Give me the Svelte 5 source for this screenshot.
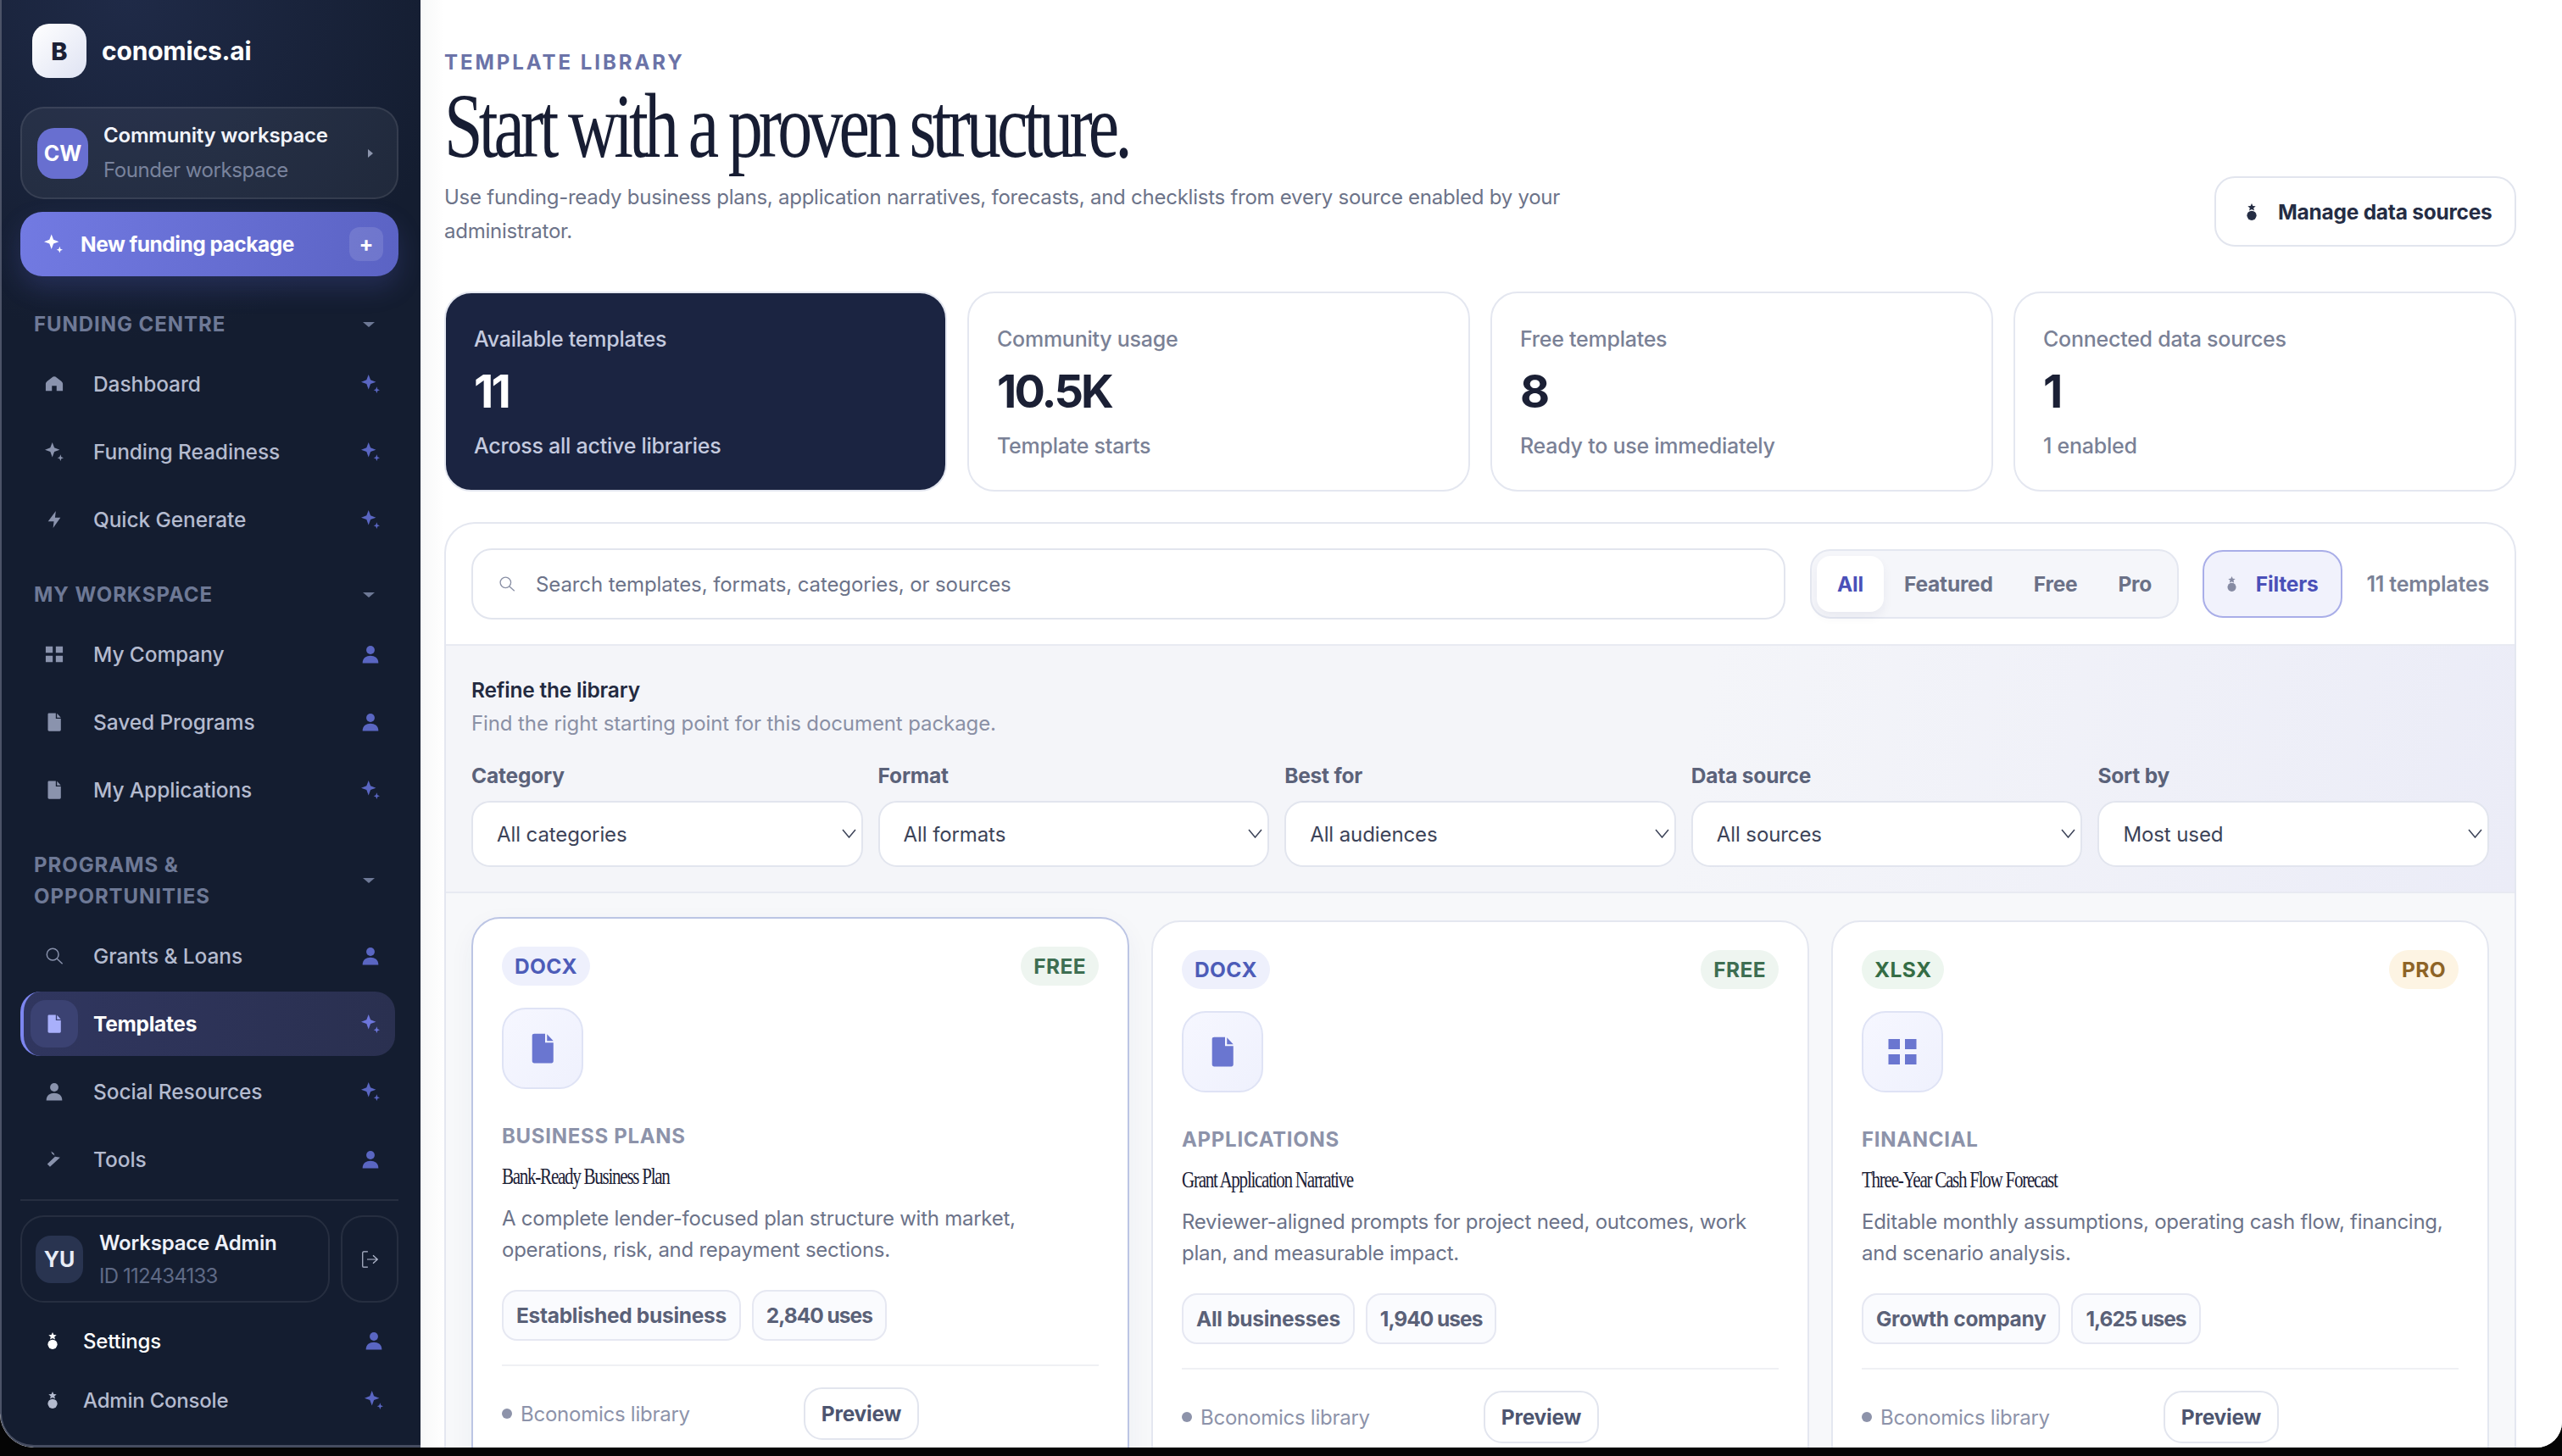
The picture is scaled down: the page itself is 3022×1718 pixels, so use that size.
<script>
  const fc = [
    { label: 'Dashboard', icon: 'home', tail: 'spark' },
    { label: 'Funding Readiness', icon: 'spark', tail: 'spark' },
    { label: 'Quick Generate', icon: 'bolt', tail: 'spark' }
  ];
  const ws = [
    { label: 'My Company', icon: 'grid', tail: 'user' },
    { label: 'Saved Programs', icon: 'file', tail: 'user' },
    { label: 'My Applications', icon: 'file', tail: 'spark' }
  ];
  const pr = [
    { label: 'Grants & Loans', icon: 'search', tail: 'user' },
    { label: 'Templates', icon: 'file', tail: 'spark', active: true },
    { label: 'Social Resources', icon: 'user', tail: 'spark' },
    { label: 'Tools', icon: 'tool', tail: 'user' }
  ];
  const groups = [
    { title: 'FUNDING CENTRE', items: fc },
    { title: 'MY WORKSPACE', items: ws },
    { title: 'PROGRAMS & OPPORTUNITIES', items: pr }
  ];
  const stats = [
    { label: 'Available templates', value: '11', sub: 'Across all active libraries', dark: true },
    { label: 'Community usage', value: '10.5K', sub: 'Template starts' },
    { label: 'Free templates', value: '8', sub: 'Ready to use immediately' },
    { label: 'Connected data sources', value: '1', sub: '1 enabled' }
  ];
  const filters = [
    { label: 'Category', value: 'All categories' },
    { label: 'Format', value: 'All formats' },
    { label: 'Best for', value: 'All audiences' },
    { label: 'Data source', value: 'All sources' },
    { label: 'Sort by', value: 'Most used' }
  ];
  const cards = [
    { fmt: 'DOCX', fmtC: 'docx', tier: 'FREE', tierC: 'free', icon: 'file', cat: 'BUSINESS PLANS', title: 'Bank-Ready Business Plan', desc: 'A complete lender-focused plan structure with market, operations, risk, and repayment sections.', tag: 'Established business', uses: '2,840 uses', lifted: true },
    { fmt: 'DOCX', fmtC: 'docx', tier: 'FREE', tierC: 'free', icon: 'file', cat: 'APPLICATIONS', title: 'Grant Application Narrative', desc: 'Reviewer-aligned prompts for project need, outcomes, work plan, and measurable impact.', tag: 'All businesses', uses: '1,940 uses' },
    { fmt: 'XLSX', fmtC: 'xlsx', tier: 'PRO', tierC: 'pro', icon: 'grid', cat: 'FINANCIAL', title: 'Three-Year Cash Flow Forecast', desc: 'Editable monthly assumptions, operating cash flow, financing, and scenario analysis.', tag: 'Growth company', uses: '1,625 uses' }
  ];
</script>

{#snippet glyph(name)}
  {#if name === 'spark'}
    <svg class="ic" viewBox="0 0 24 24"><path d="M9.500 0 L12.100 6.900 L19 9.500 L12.100 12.100 L9.500 19 L6.900 12.100 L0 9.500 L6.900 6.900 Z M20 15.500 L21.100 18.900 L24 20 L21.100 21.100 L20 24 L18.900 21.100 L16 20 L18.900 18.900 Z" fill="currentColor"/></svg>
  {:else if name === 'user'}
    <svg class="ic" viewBox="0 0 24 24"><circle cx="12" cy="6.600" r="5.400" fill="currentColor"/><path d="M1.800 23.500 C1.800 17 6.500 14 12 14 C17.500 14 22.200 17 22.200 23.500 Z" fill="currentColor"/></svg>
  {:else if name === 'home'}
    <svg class="ic" viewBox="0 0 24 24"><path d="M1 12 C1 10.500 2 9.500 3 8.500 L9 3.700 C11 2.200 13 2.200 15 3.700 L21 8.500 C22 9.500 23 10.500 23 12 V21 H15 V14.500 H9 V21 H1 Z" fill="currentColor"/></svg>
  {:else if name === 'grid'}
    <svg class="ic" viewBox="0 0 24 24"><path d="M1 2 H10 V10 H1 Z M14 2 H23 V10 H14 Z M1 14 H10 V22 H1 Z M14 14 H23 V22 H14 Z" fill="currentColor"/></svg>
  {:else if name === 'file'}
    <svg class="ic" viewBox="0 0 24 24"><path d="M5.500 0.500 H14 V7.500 H20.500 V22 C20.500 23 19.800 23.600 19 23.600 H5.500 C4.500 23.600 3.800 23 3.800 22 V2 C3.800 1 4.500 0.500 5.500 0.500 Z M15.500 0.800 L20.500 6.200 H15.500 Z" fill="currentColor"/></svg>
  {:else if name === 'bolt'}
    <svg class="ic" viewBox="0 0 24 24"><path d="M14 1 L13 9.500 H20 L10.500 23 L11.500 14.500 H4 Z" fill="currentColor"/></svg>
  {:else if name === 'search'}
    <svg class="ic" viewBox="0 0 24 24"><circle cx="10" cy="10" r="7.500" fill="none" stroke="currentColor" stroke-width="1.600"/><path d="M15.500 15.500 L22.500 22" fill="none" stroke="currentColor" stroke-width="1.600"/></svg>
  {:else if name === 'tool'}
    <svg class="ic" viewBox="0 0 24 24"><path d="M6.500 21.500 L3 18 L13 8.500 L19.500 9.500 Z M8 1.500 L11.500 4 L12.500 7 L9 4.500 Z" fill="currentColor"/></svg>
  {:else if name === 'medal'}
    <svg class="ic" viewBox="0 0 12 20"><path d="M6 0 L7.400 3 L10.700 3.300 L8.200 5.400 L9 8.600 L6 6.900 L3 8.600 L3.800 5.400 L1.300 3.300 L4.600 3 Z" fill="currentColor"/><circle cx="6" cy="14.300" r="5.600" fill="currentColor"/></svg>
  {/if}
{/snippet}

<div class="window">
  <aside class="side">
    <div class="brand">
      <div class="logo">B</div>
      <span class="wordmark">conomics.ai</span>
    </div>
    <div class="wscard">
      <div class="wsav">CW</div>
      <div class="wstext">
        <div class="wsname">Community workspace</div>
        <div class="wssub">Founder workspace</div>
      </div>
      <span class="wscaret"></span>
    </div>
    <button class="newbtn">
      <span class="newspark">{@render glyph('spark')}</span>
      <span class="newlabel">New funding package</span>
      <span class="newplus">+</span>
    </button>

    {#each groups as g}
      <section class="group">
        <div class="ghead">
          <span class="gtitle">{g.title}</span>
          <span class="gcaret"></span>
        </div>
        {#each g.items as it}
          <div class="nav" class:active={it.active}>
            <span class="navic">{@render glyph(it.icon)}</span>
            <span class="navlabel">{it.label}</span>
            <span class="navtail">{@render glyph(it.tail)}</span>
          </div>
        {/each}
      </section>
    {/each}

    <div class="sidefoot">
      <div class="userrow">
        <div class="usercard">
          <div class="userav">YU</div>
          <div>
            <div class="username">Workspace Admin</div>
            <div class="userid">ID 112434133</div>
          </div>
        </div>
        <div class="logout">
          <svg viewBox="0 0 24 24" class="logoutic"><path d="M9 1.500 H3.500 C2.500 1.500 2 2 2 3 V21 C2 22 2.500 22.500 3.500 22.500 H9 M8 12 H22 M16 6.500 L22 12 L16 17.500" fill="none" stroke="currentColor" stroke-width="1.400"/></svg>
        </div>
      </div>
      <div class="footnav bright">
        <span class="footic">{@render glyph('medal')}</span>
        <span class="footlabel">Settings</span>
        <span class="foottail">{@render glyph('user')}</span>
      </div>
      <div class="footnav">
        <span class="footic">{@render glyph('medal')}</span>
        <span class="footlabel">Admin Console</span>
        <span class="foottail">{@render glyph('spark')}</span>
      </div>
    </div>
  </aside>

  <main class="main">
    <header class="head">
      <div>
        <div class="eyebrow">TEMPLATE LIBRARY</div>
        <h1 class="title">Start with a proven structure.</h1>
        <p class="lede">Use funding-ready business plans, application narratives, forecasts, and checklists from every source enabled by your administrator.</p>
      </div>
      <button class="manage">
        <span class="manageic">{@render glyph('medal')}</span>
        Manage data sources
      </button>
    </header>

    <div class="stats">
      {#each stats as s}
        <div class="stat" class:dark={s.dark}>
          <div class="statlabel">{s.label}</div>
          <div class="statvalue">{s.value}</div>
          <div class="statsub">{s.sub}</div>
        </div>
      {/each}
    </div>

    <div class="panel">
      <div class="toolbar">
        <div class="search">
          <span class="searchic">{@render glyph('search')}</span>
          <span>Search templates, formats, categories, or sources</span>
        </div>
        <div class="seg">
          <span class="segitem on">All</span>
          <span class="segitem">Featured</span>
          <span class="segitem">Free</span>
          <span class="segitem">Pro</span>
        </div>
        <button class="filters">
          <span class="filtic">{@render glyph('medal')}</span>
          Filters
        </button>
        <span class="count">11 templates</span>
      </div>

      <div class="refine">
        <div class="refinetitle">Refine the library</div>
        <div class="refinesub">Find the right starting point for this document package.</div>
        <div class="refinegrid">
          {#each filters as f}
            <div class="field">
              <div class="fieldlabel">{f.label}</div>
              <div class="selectbox">
                <select class="select"><option>{f.value}</option></select>
                <svg class="chev" viewBox="0 0 17 11"><path d="M1 1 L8.500 10 L16 1" fill="none" stroke="currentColor" stroke-width="1.500"/></svg>
              </div>
            </div>
          {/each}
        </div>
      </div>

      <div class="cards">
        {#each cards as c}
          <article class="card" class:lifted={c.lifted}>
            <div class="cardtop">
              <span class="pill {c.fmtC}">{c.fmt}</span>
              <span class="pill {c.tierC}">{c.tier}</span>
            </div>
            <div class="tile">{@render glyph(c.icon)}</div>
            <div class="cat">{c.cat}</div>
            <h3 class="ctitle">{c.title}</h3>
            <p class="cdesc">{c.desc}</p>
            <div class="tags">
              <span class="tag">{c.tag}</span>
              <span class="tag uses">{c.uses}</span>
            </div>
            <div class="cfoot">
              <span class="source"><span class="dot"></span>Bconomics library</span>
              <button class="preview">Preview</button>
            </div>
          </article>
        {/each}
      </div>
    </div>
  </main>
</div>

<style>
  :global(body) { margin: 0; background: #050505; }
  .window {
    width: 3022px; height: 1708px; display: flex; overflow: hidden;
    border-radius: 0 0 30px 40px; background: #fff;
    font-family: Inter, "Noto Sans", sans-serif; color: #1b2035;
  }
  button { font-family: inherit; }
  .ic { display: block; width: 100%; height: 100%; }

  .side {
    width: 496px; flex: none; box-sizing: border-box; padding: 28px 26px 0 22px;
    display: flex; flex-direction: column;
    background: radial-gradient(circle at 30% 0%, #1f2a47 0, #141d30 400px), #141d30;
    border-left: 2px solid #4c5367; border-bottom: 3px solid #454c60; border-radius: 0 0 0 40px;
    color: #b4bbcf;
  }
  .brand { display: flex; align-items: center; gap: 18px; padding-left: 14px; margin-bottom: 34px; }
  .logo {
    width: 64px; height: 64px; border-radius: 20px; display: flex; align-items: center; justify-content: center;
    background: linear-gradient(135deg, #fff, #dfe3f3); color: #1b2035; font-weight: 800; font-size: 29px;
  }
  .wordmark { color: #fff; font-size: 30px; font-weight: 700; letter-spacing: -0.200px; }
  .wscard {
    height: 109px; box-sizing: border-box; display: flex; align-items: center; gap: 18px; padding: 0 18px;
    border: 2px solid rgba(255,255,255,.09); background: rgba(255,255,255,.055); border-radius: 28px; margin-bottom: 15px;
  }
  .wsav {
    width: 60px; height: 60px; border-radius: 20px; background: #686fd0; color: #fff;
    display: flex; align-items: center; justify-content: center; font-size: 25px; font-weight: 700; flex: none;
  }
  .wstext { flex: 1; min-width: 0; }
  .wsname { color: #f2f4fb; font-size: 24px; font-weight: 600; line-height: 40px; letter-spacing: -0.200px; }
  .wssub { color: #79839d; font-size: 24px; font-weight: 400; line-height: 40px; letter-spacing: -0.450px; margin-top: 1px; }
  .wscaret { width: 0; height: 0; border-left: 6px solid #8c95ad; border-top: 5px solid transparent; border-bottom: 5px solid transparent; margin-right: 10px; }
  .newbtn {
    height: 76px; flex: none; border: 0; border-radius: 26px; background: linear-gradient(100deg, #727ae2, #5b63c4);
    color: #fff; display: flex; align-items: center; padding: 0 18px 0 28px; cursor: pointer;
    box-shadow: 0 14px 30px rgba(90,100,210,.22); margin-bottom: 38px;
  }
  .newspark { width: 22px; height: 23px; margin-right: 21px; margin-top: -2px; }
  .newlabel { flex: 1; text-align: left; font-size: 24.500px; font-weight: 700; letter-spacing: -0.500px; }
  .newplus {
    width: 40px; height: 40px; border-radius: 12px; background: rgba(255,255,255,.12);
    display: flex; align-items: center; justify-content: center; font-size: 25px; font-weight: 700;
  }

  .group { margin-bottom: 28px; }
  .group:last-of-type { margin-bottom: 0; }
  .ghead { display: flex; align-items: center; padding: 0 28px 0 16px; margin-bottom: 14px; min-height: 37px; }
  .gtitle { flex: 1; max-width: 270px; font-size: 24px; line-height: 37px; font-weight: 700; letter-spacing: 0.950px; color: #6e7996; }
  .gcaret { margin-left: auto; width: 0; height: 0; border-top: 6px solid #6e7996; border-left: 7px solid transparent; border-right: 7px solid transparent; }
  .nav {
    position: relative; height: 76px; margin: 0 4px 4px 0; box-sizing: border-box;
    display: flex; align-items: center; padding: 0 18px 0 0; font-size: 24.500px; font-weight: 500; border-radius: 24px;
  }
  .navic { width: 22px; height: 24px; margin-left: 29px; margin-right: 35px; color: #8a93ad; flex: none; }
  .navlabel { flex: 1; letter-spacing: -0.100px; }
  .navtail { width: 22px; height: 24px; color: #5a66c2; flex: none; }
  .nav.active {
    background: linear-gradient(90deg, #30365f, #2a3050); color: #fff; font-weight: 700; border-left: 4px solid #7d86f0;
    isolation: isolate;
  }
  .nav.active .navlabel { letter-spacing: -0.300px; }
  .nav.active .navic { color: #a9b0fb; margin-left: 25px; position: relative; }
  .nav.active .navic::before {
    content: ""; position: absolute; left: -17px; top: -16px; width: 56px; height: 56px;
    border-radius: 18px; background: #3b4272; z-index: -1;
  }
  .nav.active .navtail { color: #6d76dc; }

  .sidefoot { margin-top: auto; border-top: 2px solid rgba(255,255,255,.08); padding-top: 17px; padding-bottom: 18px; }
  .userrow { display: flex; gap: 13px; margin-bottom: 10px; }
  .usercard {
    width: 365px; height: 103px; box-sizing: border-box; display: flex; align-items: center; gap: 19px; padding-left: 16px;
    border: 2px solid rgba(255,255,255,.08); border-radius: 28px;
  }
  .userav {
    width: 56px; height: 56px; border-radius: 18px; background: #293450; color: #e8ecf6;
    display: flex; align-items: center; justify-content: center; font-weight: 700; font-size: 25px; flex: none;
  }
  .username { color: #eef1f9; font-size: 24px; font-weight: 600; line-height: 39px; letter-spacing: -0.200px; }
  .userid { color: #5f6a86; font-size: 24px; line-height: 39px; letter-spacing: -0.800px; }
  .logout {
    width: 68px; height: 103px; box-sizing: border-box; border: 2px solid rgba(255,255,255,.08); border-radius: 26px;
    display: flex; align-items: center; justify-content: center; color: #b4bbcf;
  }
  .logoutic { width: 21px; height: 22px; }
  .footnav { height: 70px; display: flex; align-items: center; font-size: 24px; font-weight: 500; color: #b4bbcf; }
  .footnav.bright { color: #fff; }
  .footic { width: 12px; height: 20px; margin-left: 32px; margin-right: 30px; flex: none; }
  .footlabel { flex: 1; letter-spacing: -0.200px; }
  .foottail { width: 22px; height: 24px; color: #5a66c2; margin-right: 18px; }

  .main {
    flex: 1; min-width: 0; box-sizing: border-box; padding: 58px 54px 0 28px; overflow: hidden;
    background: linear-gradient(90deg, #f7f8f8 0, #fff 28px);
  }
  .head { display: flex; justify-content: space-between; align-items: flex-end; margin-bottom: 51px; }
  .eyebrow { font-size: 24px; line-height: 30px; font-weight: 700; letter-spacing: 2.950px; color: #6b73a8; margin-top: 1px; margin-bottom: -1px; }
  .title {
    margin: 7px 0 10px; font-family: "Liberation Serif", serif; font-weight: 400; font-size: 108px; line-height: 108px;
    letter-spacing: -6.500px; color: #171d33; transform: scaleX(0.76); transform-origin: left center; white-space: nowrap;
  }
  .lede { margin: 0; width: 1400px; font-size: 24px; line-height: 40px; color: #6c7389; letter-spacing: -0.250px; }
  .manage {
    width: 356px; height: 83px; box-sizing: border-box; border: 2px solid #e2e5ee; background: #fff; border-radius: 24px;
    display: flex; align-items: center; gap: 25px; padding: 0 0 0 36px; font-size: 24.500px; font-weight: 700; color: #252d44;
    letter-spacing: -0.250px; margin-bottom: 2px;
  }
  .manageic { width: 12px; height: 20px; display: block; }

  .stats { display: grid; grid-template-columns: repeat(4, 1fr); gap: 24px; margin-bottom: 36px; }
  .stat {
    height: 236px; box-sizing: border-box; padding: 34px 33px 0; border: 2px solid #e4e7f0; border-radius: 32px; background: #fff; color: #7a8196;
  }
  .stat.dark { background: #1b2441; border-color: #e4e7f0; color: #c4cadf; }
  .statlabel { font-size: 25px; line-height: 40px; font-weight: 500; letter-spacing: -0.250px; }
  .statvalue { font-size: 54px; line-height: 72px; font-weight: 700; color: #1b2035; letter-spacing: -2.800px; margin: 6px 0 8px; }
  .stat.dark .statvalue { color: #fff; }
  .statsub { font-size: 25px; line-height: 40px; font-weight: 500; letter-spacing: -0.250px; }

  .panel { border: 2px solid #e4e7f0; border-bottom: 0; border-radius: 36px 36px 0 0; background: #fff; overflow: hidden; }
  .toolbar { height: 144px; box-sizing: border-box; display: flex; align-items: center; padding: 0 30px; border-bottom: 2px solid #e8eaf2; }
  .search {
    width: 1550px; height: 84px; box-sizing: border-box; flex: none; display: flex; align-items: center;
    border: 2px solid #e2e5ee; border-radius: 24px; font-size: 24px; color: #6c7389; letter-spacing: -0.100px;
  }
  .searchic { width: 20px; height: 20px; margin: 0 24px 0 30px; color: #8a90a5; }
  .seg {
    margin-left: 29px; height: 82px; box-sizing: border-box; padding: 6px; display: flex; align-items: center; gap: 0;
    border: 2px solid #e4e7f0; border-radius: 24px; background: #f5f6fa; font-size: 24.500px; font-weight: 700; color: #6b7187;
    letter-spacing: -0.200px;
  }
  .segitem { padding: 0 24px; line-height: 66px; }
  .segitem.on { background: #fff; color: #4a50b8; border-radius: 16px; box-shadow: 0 6px 12px rgba(30,40,90,.06); }
  .filters {
    margin-left: 28px; width: 165px; height: 80px; box-sizing: border-box; border: 2px solid #a9aee8; border-radius: 24px; background: #f1f2fc;
    display: flex; align-items: center; justify-content: center; gap: 23px; font-size: 24.500px; font-weight: 700; color: #4a50b8; letter-spacing: -0.200px;
  }
  .filtic { width: 11px; height: 18px; color: #868ba3; display: block; }
  .count { margin-left: auto; font-size: 25px; font-weight: 600; color: #7a8196; letter-spacing: -0.200px; }

  .refine {
    height: 292px; box-sizing: border-box; padding: 32px 30px 0; border-bottom: 2px solid #e8eaf2;
    background: linear-gradient(100deg, #f4f5f9 0, #f4f5f9 60%, #ebecf7 100%);
  }
  .refinetitle { font-size: 24.500px; line-height: 40px; font-weight: 600; color: #232a40; letter-spacing: -0.200px; }
  .refinesub { font-size: 24px; line-height: 40px; color: #8a90a5; margin-bottom: 21px; letter-spacing: -0.100px; }
  .refinegrid { display: grid; grid-template-columns: repeat(5, 1fr); gap: 18px; }
  .fieldlabel { font-size: 24.500px; line-height: 40px; font-weight: 700; color: #5b6279; letter-spacing: -0.200px; margin-bottom: 10px; }
  .selectbox { position: relative; }
  .select {
    appearance: none; display: block; width: 100%; height: 78px; box-sizing: border-box; padding: 0 28px;
    border: 2px solid #e2e5ee; border-radius: 22px; background: #fff; font-family: inherit; font-size: 24px; color: #3c4358; letter-spacing: -0.100px;
  }
  .chev { position: absolute; right: 8px; top: 33px; width: 17px; height: 11px; color: #3c4358; }

  .cards {
    display: grid; grid-template-columns: repeat(3, 1fr); gap: 26px; padding: 32px 30px 0 30px; height: 640px;
    background: #f7f8fa;
  }
  .card { box-sizing: border-box; height: 700px; padding: 33px 34px 0; border: 2px solid #e4e7f0; border-radius: 34px; background: #fff; }
  .card.lifted { transform: translateY(-4px); border-color: #bcc5e4; box-shadow: 0 10px 30px rgba(40,50,110,.05); }
  .cardtop { display: flex; justify-content: space-between; }
  .pill { height: 46px; line-height: 46px; padding: 0 15px; border-radius: 23px; font-size: 24.500px; font-weight: 700; letter-spacing: 0.400px; }
  .docx { background: #eef0fc; color: #4d5cb8; }
  .free { background: #eef5f0; color: #3e6e52; }
  .xlsx { background: #edf6ef; color: #356d45; }
  .pro { background: #fdf4e3; color: #8e6427; }
  .tile {
    margin-top: 26px; width: 96px; height: 96px; box-sizing: border-box; padding: 28px 26px; border: 2px solid #dfe3f5; border-radius: 28px;
    background: linear-gradient(135deg, #f6f7ff, #eff1fd); color: #6a76d0;
  }
  .cat { margin-top: 37px; font-size: 24px; line-height: 37px; font-weight: 700; letter-spacing: 0.700px; color: #8d93aa; }
  .ctitle {
    margin: 11px 0 13px; font-family: "Liberation Serif", serif; font-size: 27px; line-height: 36px; font-weight: 400; color: #1b2035;
    letter-spacing: -1.630px; transform: scaleX(0.78); transform-origin: left center; white-space: nowrap;
  }
  .cdesc { margin: 0 0 29px; font-size: 24px; line-height: 37px; color: #6c7389; letter-spacing: -0.250px; height: 74px; }
  .tags { display: flex; gap: 13px; padding-bottom: 28px; border-bottom: 2px solid #eff0f4; }
  .tag {
    height: 60px; box-sizing: border-box; line-height: 56px; padding: 0 15px; border: 2px solid #e6e8f2; border-radius: 18px; background: #fafbfe;
    font-size: 24.500px; font-weight: 700; color: #5a6178; letter-spacing: -0.300px;
  }
  .tag.uses { letter-spacing: -1px; }
  .cfoot { display: flex; align-items: center; margin-top: 25px; }
  .source { width: 356px; display: flex; align-items: center; gap: 10px; font-size: 24px; color: #8d93aa; letter-spacing: -0.250px; }
  .dot { width: 12px; height: 12px; border-radius: 50%; background: #8d93aa; }
  .preview {
    width: 136px; height: 62px; border: 2px solid #e2e5ee; border-radius: 22px; background: #fff; font-size: 24.500px; font-weight: 700; color: #4d5570; letter-spacing: -0.200px;
  }
</style>
